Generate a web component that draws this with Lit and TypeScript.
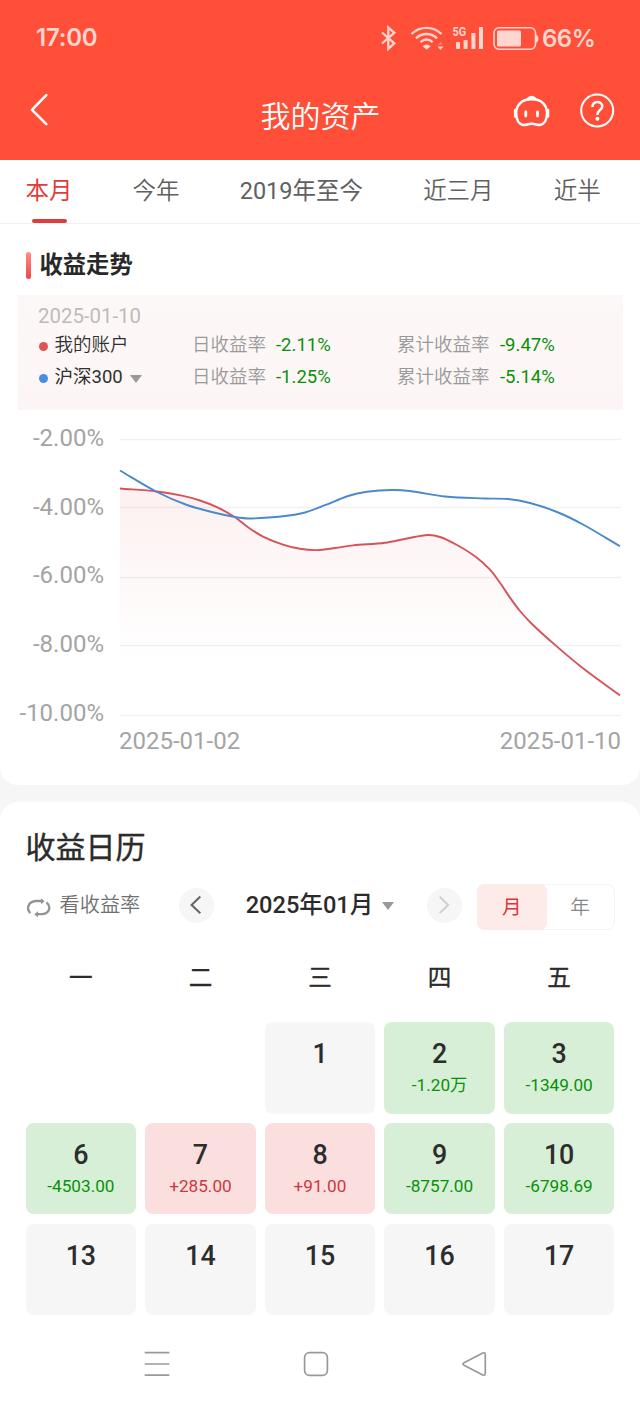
import { LitElement, html, css, svg } from "lit";
import { customElement } from "lit/decorators.js";
import { classMap } from "lit/directives/class-map.js";

type Point = [number, number];

const PORTFOLIO: Point[] = [
  [0, 58.5], [37, 61.5], [62, 65.6], [80, 70.5], [98, 77.6], [115, 87.3], [128, 97.2], [143, 106.6], [163, 114.6],
  [180, 118.8], [197, 120.1], [215, 118], [233, 115.4], [265, 112.8], [287, 108.5], [308, 105], [320, 107], [337, 115],
  [355, 126.3], [370, 139.6], [380, 152.8], [390, 167.6], [400, 181], [412, 194], [435, 214.9], [463, 238.3], [500, 265.4],
];

const BENCHMARK: Point[] = [
  [0, 40.5], [36, 61.5], [67, 75], [96, 83], [115, 87], [131, 88.5], [165, 86], [185, 82.5],
  [205, 75.2], [228, 66], [247, 61.8], [272, 60], [290, 61], [325, 66.5], [365, 68.5],
  [388, 69], [410, 73], [437, 82], [463, 94.5], [500, 116.3],
];

const GRID = [9.5, 77.5, 147.5, 215.5, 285.5];

function smooth(points: Point[]): string {
  let d = `M${points[0][0]} ${points[0][1]}`;
  for (let i = 0; i < points.length - 1; i++) {
    const a = points[Math.max(i - 1, 0)];
    const b = points[i];
    const c = points[i + 1];
    const e = points[Math.min(i + 2, points.length - 1)];
    const t = (c[0] - b[0]) / 3;
    const m1 = (c[1] - a[1]) / (c[0] - a[0]);
    const m2 = (e[1] - b[1]) / (e[0] - b[0]);
    d += `C${b[0] + t} ${b[1] + m1 * t} ${c[0] - t} ${c[1] - m2 * t} ${c[0]} ${c[1]}`;
  }
  return d;
}

@customElement("status-bar")
class StatusBar extends LitElement {
  static styles = css`
    :host { display: flex; height: 76px; padding: 0 44px 0 36px; align-items: center; justify-content: space-between;
      color: #ffd6cf; font: 600 24px/32px Inter, Roboto, sans-serif; }
    .time { letter-spacing: -0.2px; }
    .right { display: flex; align-items: center; }
    .level { width: 54px; letter-spacing: -0.5px; white-space: nowrap; padding-top: 2px; }
    svg { display: block; }
    .net { font: 700 12px Roboto, sans-serif; }
  `;
  render() {
    return html`
      <span class="time">17:00</span>
      <div class="right">
        <svg width="164" height="32" viewBox="378 22 164 32" fill="none" stroke="#ffd6cf" stroke-width="2.3">
          <path d="M382 32.5L394.3 43.3L388.3 48.8V27.5L394.3 32.8L382 43.5" />
          <path d="M411.5 34C420 25.8 433 25.8 441.5 34" stroke-width="2.4" />
          <path d="M416 38.3C422 32.6 431 32.6 437 38.3" stroke-width="2.4" />
          <path d="M420.5 42.2C424.5 38.8 428.7 38.8 432.7 42.2" stroke-width="2.4" />
          <path d="M422.6 46.2Q426.7 43 430.8 46.2L426.7 49.8Z" fill="#ffd6cf" stroke="none" />
          <path d="M437.5 46.5H443.5L440.5 50Z" fill="#ffd6cf" stroke="none" />
          <path d="M438 44.4L440.5 42L443 44.4Z" fill="#ff8f80" stroke="none" />
          <g fill="#ffd6cf" stroke="none">
            <rect x="456" y="42" width="4" height="7" rx=".6" />
            <rect x="463.6" y="40" width="4" height="9" rx=".6" />
            <rect x="471.4" y="33" width="4" height="16" rx=".6" />
            <rect x="479" y="27" width="4" height="22" rx=".6" />
            <text class="net" x="452.6" y="36" textLength="13.6" lengthAdjust="spacingAndGlyphs">5G</text>
            <rect x="497" y="30.5" width="24" height="16" rx="1.5" />
            <path d="M536 34.5Q538.6 36 538.6 38.7Q538.6 41.5 536 43Z" />
          </g>
          <rect x="494" y="27.8" width="41.5" height="21.4" rx="5" stroke-width="1.6" />
        </svg>
        <span class="level">66%</span>
      </div>`;
  }
}

@customElement("nav-header")
class NavHeader extends LitElement {
  static styles = css`
    :host { display: grid; grid-template-columns: 120px 1fr 123px; height: 84px; color: #fff; padding: 0 24px 0 28px;
      font: 400 30px/44px Roboto, "Noto Sans CJK SC", sans-serif; }
    .title { text-align: center; padding-top: 18.5px; font-weight: 350; }
    .back { padding-top: 15px; }
    .tools { display: flex; justify-content: flex-end; gap: 27px; padding-top: 15px; }
    svg { display: block; }
  `;
  render() {
    return html`
      <div class="back"><svg width="24" height="38" viewBox="28 91 24 38" fill="none" stroke="#fff" stroke-width="2.6" stroke-linecap="round" stroke-linejoin="round"><path d="M46.3 95.2L32 109.8L46.3 124.2" /></svg></div>
      <div class="title">我的资产</div>
      <div class="tools">
        <svg width="40" height="40" viewBox="512 91 40 40" fill="none" stroke="#fff" stroke-width="2.4" stroke-linecap="round">
          <path d="M522.5 101.2C525.4 99.4 528.4 99.2 531.6 99.2S537.8 99.4 540.7 101.2C545.2 104.2 547 108.4 547 113C547 119.6 544.4 124.2 539.8 125C536.6 125.3 535.8 123.8 531.6 123.8S526.6 125.3 523.4 125C518.8 124.2 516.2 119.6 516.2 113C516.2 108.4 518 104.2 522.5 101.2Z" />
          <path d="M528.2 98.6Q531.6 95.2 535 98.6" />
          <path d="M515.2 110V116.5M548 110V116.5" stroke-width="2.6" />
          <path d="M525.8 112V116M537.5 112V116" stroke-width="2.8" />
        </svg>
        <svg width="37" height="40" viewBox="579 91 37 40" fill="none" stroke="#fff" stroke-width="2">
          <circle cx="597.2" cy="110.5" r="16" />
          <path d="M592.4 107C592 100.4 602.6 100.6 602.3 106.4C602.1 109.8 597.4 110.4 597.4 115" stroke-width="2.5" />
          <circle cx="597.4" cy="118.7" r="2" fill="#fff" stroke="none" />
        </svg>
      </div>`;
  }
}

@customElement("trend-card")
class TrendCard extends LitElement {
  static styles = css`
    :host { display: block; height: 624.5px; background: #fff; border-radius: 0 0 18px 18px; overflow: hidden;
      font-family: Roboto, "Noto Sans CJK SC", sans-serif; }
    .tabs { display: flex; height: 64px; border-bottom: 1px solid #f1f1f1; padding-left: 25.5px; gap: 60.1px; box-sizing: border-box;
      font-size: 23.5px; line-height: 62px; color: #606060; white-space: nowrap; overflow: hidden; }
    .tab { display: flex; flex-direction: column; align-items: center; flex: none; }
    .on { color: #e13d3d; }
    .on::after { content: ""; width: 35px; height: 4px; border-radius: 2px; background: #dd3d3f; margin-top: -3px; }
    .cjk { font-weight: 350; }
    .heading { display: flex; align-items: center; gap: 8.5px; height: 54px; padding: 14px 0 3px 25.5px; box-sizing: content-box;
      font: 700 23.3px/54px Roboto, "Noto Sans CJK SC", sans-serif; color: #282828; }
    .mark { width: 5.5px; height: 27px; border-radius: 3px; background: linear-gradient(#ff8f83, #e9484b); }
    .panel { margin: 0 17px 0 18px; height: 115px; padding: 6px 20px 0; box-sizing: border-box;
      background: linear-gradient(#fcf8f7, #fdf5f5); }
    .date { font-size: 20.4px; line-height: 31px; color: #bcbcbc; }
    .row { display: grid; grid-template-columns: 154px 84px 121px 103px 1fr; font-size: 18.5px; line-height: 32px; height: 32px;
      margin-top: -3px; color: #999; white-space: nowrap; }
    .row + .row { margin-top: 0; }
    .name { color: #303030; display: flex; align-items: center; }
    .dot { width: 9px; height: 9px; border-radius: 50%; margin: 3px 6.5px 0 1px; background: #e15252; }
    .dot.blue { background: #4a8ee0; }
    .caret { border: 6px solid transparent; border-top: 8px solid #999; border-bottom: 0; margin: 3px 0 0 7.5px; }
    .loss { color: #089108; }
    .chart { display: grid; grid-template: 290px 30px / 104px 500px; gap: 6px 16px; padding-top: 20px; }
    .axis { display: flex; flex-direction: column; text-align: right; color: #a4a4a4; font-size: 24px; line-height: 68.7px;
      height: 290px; margin-top: -26px; white-space: nowrap; }
    svg { display: block; overflow: visible; }
    .dates { grid-column: 2; display: flex; justify-content: space-between; color: #a4a4a4; font-size: 24px; line-height: 30px;
      margin: 0 -1px; }
  `;
  private row(name: string, blue: boolean, day: string, total: string) {
    return html`<div class="row">
      <span class=${classMap({ name: true, cjk: !blue })}><i class=${classMap({ dot: true, blue })}></i>${name}${blue ? html`<i class="caret"></i>` : ""}</span>
      <span class="cjk">日收益率</span><span class="loss">${day}</span><span class="cjk">累计收益率</span><span class="loss">${total}</span>
    </div>`;
  }
  render() {
    const line = smooth(PORTFOLIO);
    return html`
      <div class="tabs">
        ${["本月", "今年", "2019年至今", "近三月", "近半"].map((t, i) => html`<span class=${classMap({ tab: true, on: i === 0, cjk: i !== 0 && i !== 2 })}>${t}</span>`)}
      </div>
      <div class="heading"><i class="mark"></i>收益走势</div>
      <div class="panel">
        <div class="date">2025-01-10</div>
        ${this.row("我的账户", false, "-2.11%", "-9.47%")}
        ${this.row("沪深300", true, "-1.25%", "-5.14%")}
      </div>
      <div class="chart">
        <div class="axis">${["-2.00%", "-4.00%", "-6.00%", "-8.00%", "-10.00%"].map((t) => html`<span>${t}</span>`)}</div>
        <svg width="500" height="290" viewBox="0 0 500 290" fill="none">
          <defs><linearGradient id="fade" gradientUnits="userSpaceOnUse" x1="0" y1="58" x2="0" y2="230">
            <stop offset="0" stop-color="#e04848" stop-opacity=".08" /><stop offset="1" stop-color="#e04848" stop-opacity="0" />
          </linearGradient></defs>
          ${GRID.map((y) => svg`<path d="M0 ${y}H501" stroke="#f1f1f1" stroke-width="1.4" />`)}
          <path d="${line}V286H0Z" fill="url(#fade)" />
          <path d=${line} stroke="#d4545a" stroke-width="1.9" />
          <path d=${smooth(BENCHMARK)} stroke="#4a89cc" stroke-width="1.9" />
        </svg>
        <div class="dates"><span>2025-01-02</span><span>2025-01-10</span></div>
      </div>`;
  }
}

interface Day { n?: number; v?: string; }
const DAYS: Day[] = [
  {}, {}, { n: 1 }, { n: 2, v: "-1.20万" }, { n: 3, v: "-1349.00" },
  { n: 6, v: "-4503.00" }, { n: 7, v: "+285.00" }, { n: 8, v: "+91.00" }, { n: 9, v: "-8757.00" }, { n: 10, v: "-6798.69" },
  { n: 13 }, { n: 14 }, { n: 15 }, { n: 16 }, { n: 17 },
];

@customElement("calendar-card")
class CalendarCard extends LitElement {
  static styles = css`
    :host { display: block; height: 517.5px; margin-top: 17px; padding: 22.5px 25.5px 0; box-sizing: border-box; background: #fff;
      border-radius: 18px 18px 0 0; font-family: Roboto, "Noto Sans CJK SC", sans-serif; color: #2b2b2b; }
    .title { font-size: 30px; line-height: 48px; font-weight: 400; -webkit-text-stroke: 0.4px #2b2b2b; }
    .bar { display: flex; height: 48px; margin-top: 10.5px; align-items: center; }
    .rate { display: flex; align-items: center; gap: 9px; width: 153px; font-size: 20.2px; line-height: 44px; font-weight: 350; color: #707070; padding-bottom: 4px; box-sizing: border-box; }
    .rate svg { margin-top: 5px; }
    svg { display: block; }
    .round { width: 35px; height: 35px; border-radius: 50%; background: #f6f6f6; display: flex; align-items: center; justify-content: center; margin-bottom: 3px; }
    .month { display: flex; align-items: center; justify-content: center; width: 213px; font-size: 23.6px; line-height: 44px; font-weight: 500; padding-bottom: 3px; box-sizing: border-box; white-space: nowrap; }
    .caret { border: 6px solid transparent; border-top: 8px solid #999; border-bottom: 0; margin: 2px 0 0 9px; }
    .switch { display: flex; width: 137.5px; height: 46.5px; margin: 1px 0 0 auto; border: 1px solid #f5f4f4; border-radius: 8px; box-sizing: border-box;
      font-size: 19.6px; line-height: 46px; font-weight: 350; text-align: center; color: #888; }
    .switch span { flex: 1; }
    .switch .sel { background: #fdebea; color: #d9363c; border-radius: 7px; margin: -1px 0 -1px -1px; line-height: 48px; font-weight: 400; flex: 0 0 69.5px; }
    .grid { display: grid; grid-template-columns: repeat(5, 1fr); column-gap: 8.8px; text-align: center; }
    .week { font-size: 23.6px; line-height: 46px; font-weight: 400; margin-top: 24px; -webkit-text-stroke: 0.3px #2b2b2b; }
    .days { grid-auto-rows: 91.6px; row-gap: 9.2px; margin-top: 21.6px; }
    .cell { border-radius: 8px; background: #f6f6f6; padding-top: 15px; box-sizing: border-box; }
    .none { background: none; }
    .down { background: #d6efd6; color: #089108; }
    .up { background: #fbdfde; color: #cf363e; }
    .n { font-size: 26.8px; line-height: 34px; font-weight: 500; color: #2d2d2d; }
    .v { font-size: 17.2px; line-height: 28px; }
  `;
  render() {
    return html`
      <div class="title">收益日历</div>
      <div class="bar">
        <div class="rate">
          <svg width="25" height="21" viewBox="0 0 25 21" fill="none" stroke="#939393" stroke-width="2.3">
            <path d="M4.3 16.2C0.2 12.4 1.6 4.9 9.6 4H15.5" /><path d="M15 1.2L18.6 4.2L15 7.2Z" fill="#939393" stroke="none" />
            <path d="M20.5 5.4C25.4 9.4 23.8 16.2 16.4 17.2H11.2" /><path d="M12 14.2L8.2 17.2L12 20.2Z" fill="#939393" stroke="none" />
          </svg>看收益率</div>
        <div class="round"><svg width="14" height="20" viewBox="0 0 14 20" fill="none" stroke="#666" stroke-width="2.1"><path d="M11.3 1.6L2.6 10L11.3 18.2" /></svg></div>
        <div class="month">2025年01月<i class="caret"></i></div>
        <div class="round"><svg width="14" height="20" viewBox="0 0 14 20" fill="none" stroke="#cfcfcf" stroke-width="2"><path d="M2.7 1.8L11.2 10L2.7 18" /></svg></div>
        <div class="switch"><span class="sel">月</span><span>年</span></div>
      </div>
      <div class="grid week">${["一", "二", "三", "四", "五"].map((d) => html`<span>${d}</span>`)}</div>
      <div class="grid days">
        ${DAYS.map((d) => html`<div class=${classMap({ cell: true, none: !d.n, down: !!d.v?.startsWith("-"), up: !!d.v?.startsWith("+") })}>
          <div class="n">${d.n ?? ""}</div><div class="v">${d.v ?? ""}</div></div>`)}
      </div>`;
  }
}

@customElement("app-root")
class AppRoot extends LitElement {
  static styles = css`
    :host { display: block; width: 640px; height: 1408px; overflow: hidden; background: #f6f6f6; }
    .top { background: #ff4f38; height: 160px; }
    .system { display: flex; justify-content: center; gap: 131px; align-items: center; height: 89px; padding-right: 8px; box-sizing: border-box; background: #fff; }
    svg { display: block; }
  `;
  render() {
    return html`
      <div class="top"><status-bar></status-bar><nav-header></nav-header></div>
      <trend-card></trend-card>
      <calendar-card></calendar-card>
      <div class="system">
        <svg width="28" height="28" viewBox="0 0 28 28" stroke="#999" stroke-width="1.7"><path d="M1.7 2.7H26.3M1.7 14H26.3M1.7 25.2H26.3" /></svg>
        <svg width="28" height="28" viewBox="0 0 28 28" fill="none" stroke="#999" stroke-width="1.7"><rect x="2.6" y="2.6" width="22.8" height="22.8" rx="4.8" /></svg>
        <svg width="28" height="28" viewBox="0 0 28 28" fill="none" stroke="#999" stroke-width="1.7"><path d="M3 12.7L21.8 3C23.2 2.4 24.3 3 24.3 4.4V23.6C24.3 25 23.2 25.6 21.8 25L3 15.2C1.7 14.4 1.7 13.4 3 12.7Z" /></svg>
      </div>`;
  }
}
